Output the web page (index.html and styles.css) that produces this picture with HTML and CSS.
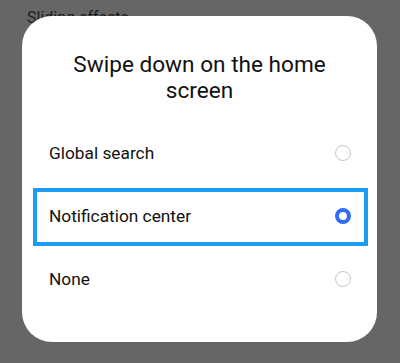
FILE: index.html
```html
<!DOCTYPE html>
<html lang="en">
<head>
<meta charset="utf-8">
<title>Swipe down on the home screen</title>
<link rel="stylesheet" href="styles.css">
</head>
<body>
<div class="page">
  <div class="behind">Sliding effects</div>
</div>
<div class="dialog">
  <h1 class="title">Swipe down on the home screen</h1>
  <ul class="options">
    <li class="option"><span class="label">Global search</span><span class="radio"></span></li>
    <li class="option selected"><span class="label">Notification center</span><span class="radio on"></span><span class="highlight"></span></li>
    <li class="option"><span class="label">None</span><span class="radio"></span></li>
  </ul>
</div>
</body>
</html>
```
FILE: styles.css
```css
html, body {
  margin: 0;
  padding: 0;
}
body {
  width: 400px;
  height: 363px;
  background: #666666;
  font-family: Roboto, "Noto Sans", sans-serif;
  position: relative;
  overflow: hidden;
}
.page {
  padding: 8px 0 0 27px;
}
.behind {
  font-size: 16px;
  line-height: 20px;
  color: #1e1e1e;
}
.dialog {
  position: absolute;
  left: 22px;
  top: 16px;
  width: 355px;
  height: 326px;
  box-sizing: border-box;
  background: #ffffff;
  border-radius: 30px;
  padding-top: 35.5px;
}
.title {
  margin: 0;
  padding: 0 30px;
  font-size: 22.6px;
  line-height: 26px;
  font-weight: 400;
  text-align: center;
  color: #111111;
}
.options {
  list-style: none;
  margin: 17.5px 0 0;
  padding: 0;
}
.option {
  position: relative;
  height: 62px;
  display: flex;
  align-items: center;
  justify-content: space-between;
  padding: 1px 26px 0 27px;
}
.label {
  font-size: 17.3px;
  color: #111111;
}
.radio {
  width: 16px;
  height: 16px;
  box-sizing: border-box;
  border-radius: 50%;
  border: 1.5px solid #c6c6c6;
}
.radio.on {
  border: 4px solid #2f6df5;
}
.highlight {
  position: absolute;
  left: 11px;
  top: 4px;
  width: 335px;
  height: 58px;
  box-sizing: border-box;
  border: 4.5px solid #1d9af1;
}
```
